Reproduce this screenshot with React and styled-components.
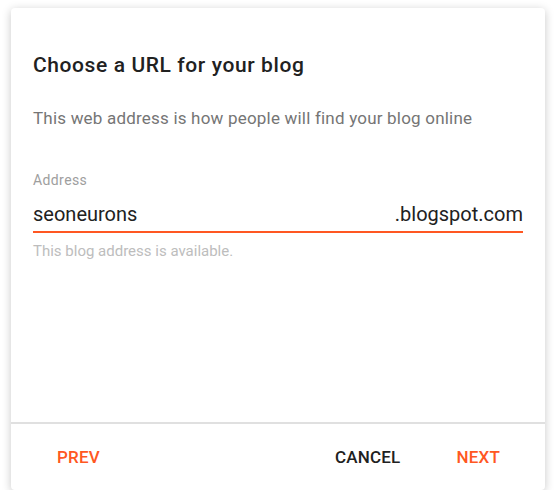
import React from 'react';
import styled, { createGlobalStyle } from 'styled-components';

const GlobalStyle = createGlobalStyle`
  body {
    margin: 0;
    background: #fff;
    font-family: Roboto, "Liberation Sans", Arial, sans-serif;
  }
`;

function App() {
  return (
    <>
      <GlobalStyle />
      <Page>
        <Dialog>
          <Body>
            <Title>Choose a URL for your blog</Title>
            <Subtitle>This web address is how people will find your blog online</Subtitle>

            <Field>
              <Label>Address</Label>
              <InputRow>
                <InputText>seoneurons</InputText>
                <Suffix>.blogspot.com</Suffix>
              </InputRow>
              <Helper>This blog address is available.</Helper>
            </Field>
          </Body>

          <Footer>
            <TextButton $accent>Prev</TextButton>
            <Spacer />
            <TextButton>Cancel</TextButton>
            <TextButton $accent>Next</TextButton>
          </Footer>
        </Dialog>
      </Page>
    </>
  );
}

const Page = styled.div`
  padding: 8px 12px 0 11px;
`;

const Dialog = styled.div`
  width: 534px;
  height: 482px;
  box-sizing: border-box;
  background: #fff;
  border-radius: 4px;
  box-shadow: 0 2px 10px rgba(0, 0, 0, 0.22);
  display: flex;
  flex-direction: column;
`;

const Body = styled.div`
  flex: 1;
  padding: 45px 22px 0 22px;
  border-bottom: 2px solid #e0e0e0;
`;

const Title = styled.h2`
  margin: 0;
  font-size: 21px;
  line-height: 24px;
  font-weight: 500;
  letter-spacing: 0.6px;
  color: #212121;
`;

const Subtitle = styled.p`
  margin: 31px 0 0;
  font-size: 17px;
  line-height: 20px;
  letter-spacing: 0.2px;
  color: #757575;
`;

const Field = styled.div`
  margin-top: 44px;
  display: flex;
  flex-direction: column;
`;

const Label = styled.div`
  font-size: 14px;
  line-height: 16px;
  letter-spacing: 0.4px;
  color: #9e9e9e;
`;

const InputRow = styled.div`
  margin-top: 14px;
  display: flex;
  justify-content: space-between;
  align-items: baseline;
  padding-bottom: 5px;
  border-bottom: 2px solid #ff5722;
`;

const InputText = styled.span`
  font-size: 20px;
  line-height: 24px;
  color: #212121;
`;

const Suffix = styled(InputText)``;

const Helper = styled.div`
  margin-top: 10px;
  font-size: 15px;
  line-height: 16px;
  color: #bdbdbd;
`;

const Footer = styled.div`
  height: 66px;
  padding: 0 29px 0 30px;
  display: flex;
  align-items: center;
  gap: 24px;
`;

const Spacer = styled.div`
  flex: 1;
`;

const TextButton = styled.button`
  border: none;
  background: none;
  padding: 8px 16px;
  font-family: inherit;
  font-size: 17px;
  line-height: 20px;
  font-weight: 500;
  letter-spacing: 0.2px;
  text-transform: uppercase;
  cursor: pointer;
  color: ${p => (p.$accent ? '#ff5722' : '#212121')};
`;

export default App;
